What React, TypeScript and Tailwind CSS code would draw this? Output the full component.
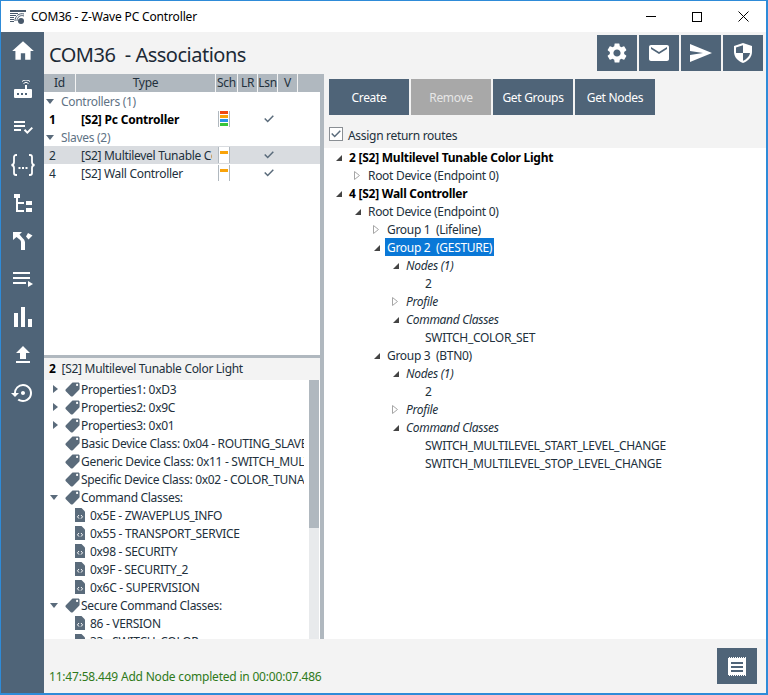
import { MdHome, MdPlaylistAddCheck, MdFileUpload, MdSettingsBackupRestore, MdSettings, MdEmail, MdLocalOffer } from 'react-icons/md';

const FONT = "font-['Noto_Sans',sans-serif]";

function RouterIcon() {
  return (
    <svg width="18" height="18" viewBox="0 0 18 18" fill="white">
      <path d="M1 9h16a1 1 0 0 1 1 1v7a1 1 0 0 1-1 1H1a1 1 0 0 1-1-1v-7a1 1 0 0 1 1-1z" />
      <rect x="11" y="5" width="2" height="4" />
      <path d="M9.500 3.500a3.500 3.500 0 0 1 5 0" fill="none" stroke="white" strokeWidth="1" />
      <path d="M8 1.500a6 6 0 0 1 8 0" fill="none" stroke="white" strokeWidth="1" />
      <rect x="3" y="13" width="2" height="2" fill="#4f6478" />
      <rect x="7" y="13" width="2" height="2" fill="#4f6478" />
      <rect x="11" y="13" width="2" height="2" fill="#4f6478" />
    </svg>
  );
}

function BracesIcon() {
  return (
    <svg width="24" height="24" viewBox="0 0 24 24" fill="none" stroke="white" strokeWidth="1.800">
      <path d="M6 2H5a2 2 0 0 0-2 2v5a3 3 0 0 1-2.500 3A3 3 0 0 1 3 15v5a2 2 0 0 0 2 2h1" />
      <path d="M18 2h1a2 2 0 0 1 2 2v5a3 3 0 0 0 2.500 3 3 3 0 0 0-2.500 3v5a2 2 0 0 1-2 2h-1" />
      <path d="M7.500 15h2M11 15h2M14.500 15h2" />
    </svg>
  );
}

function TreeIcon() {
  return (
    <svg width="18" height="18" viewBox="0 0 18 18" fill="white">
      <rect x="0" y="0" width="6" height="4" />
      <rect x="2" y="4" width="2" height="14" />
      <rect x="4" y="8" width="6" height="2" />
      <rect x="4" y="16" width="6" height="2" />
      <rect x="12" y="7" width="6" height="4" />
      <rect x="12" y="14" width="6" height="4" />
    </svg>
  );
}

function RouteIcon() {
  return (
    <svg width="20" height="18" viewBox="0 0 20 18" fill="white">
      <path d="M0 0h9L6.500 2.500l3 3.500A6 6 0 0 1 12 10v8H8v-8a3 3 0 0 0-.8-2L3.500 5 0 8z" />
      <path d="M15 1l4.500 2.500-4 4-2.500-3z" />
    </svg>
  );
}

function QueueIcon() {
  return (
    <svg width="20" height="15" viewBox="0 0 20 15" fill="white">
      <rect x="0" y="0" width="17" height="2" />
      <rect x="0" y="5" width="17" height="2" />
      <rect x="0" y="10" width="13" height="2" />
      <path d="M15 9l5 3-5 3z" />
    </svg>
  );
}

function BarsIcon() {
  return (
    <svg width="18" height="20" viewBox="0 0 18 20" fill="white">
      <rect x="0" y="6" width="4" height="14" />
      <rect x="7" y="0" width="4" height="20" />
      <rect x="14" y="12" width="4" height="8" />
    </svg>
  );
}

function SendIcon() {
  return (
    <svg width="22" height="18" viewBox="0 0 22 18" fill="white">
      <path d="M0 0l22 9L0 18v-7l13-2L0 7z" />
    </svg>
  );
}

function ShieldIcon() {
  return (
    <svg width="18" height="20" viewBox="0 0 18 20">
      <path d="M9 0l9 3v6c0 5-4 9-9 11-5-2-9-6-9-11V3z" fill="white" />
      <path d="M9 2.200L2 4.500V10h7zM9 10v7.800c3.500-1.600 6.500-4.300 7-7.800z" fill="#4f6478" />
    </svg>
  );
}

function ReceiptIcon() {
  return (
    <svg width="18" height="19" viewBox="0 0 18 19">
      <path d="M0 0h18v19H0z" fill="white" />
      <path d="M0 .500h18M0 18.500h18" stroke="#4f6478" strokeWidth="1" strokeDasharray="1 1" />
      <path d="M3 5h12v2H3zM3 9h12v2H3zM3 13h12v2H3z" fill="#4f6478" />
    </svg>
  );
}

function FileCodeIcon() {
  return (
    <svg width="10" height="14" viewBox="0 0 10 14" className="shrink-0">
      <path d="M0 0h6.500L10 3.500V14H0z" fill="#5a6b7b" />
      <path d="M4 7L2.500 8.800 4 10.600M6 7l1.500 1.800L6 10.600" fill="none" stroke="white" strokeWidth="1" />
    </svg>
  );
}

function Tag() {
  return <MdLocalOffer size={17} className="shrink-0 -scale-x-100 text-[#5a6b7b]" />;
}

function DarkExpander({ open }: { open: boolean }) {
  if (open) {
    return (
      <svg width="7" height="7" viewBox="0 0 7 7" className="shrink-0">
        <path d="M7 1v6H1z" fill="#444" />
      </svg>
    );
  }
  return (
    <svg width="6" height="9" viewBox="0 0 6 9" className="shrink-0">
      <path d="M.5.500l5 4-5 4z" fill="white" stroke="#a6a6a6" />
    </svg>
  );
}

function SolidExpander({ open }: { open: boolean }) {
  if (open) {
    return (
      <svg width="8" height="5" viewBox="0 0 8 5" className="shrink-0">
        <path d="M0 0h8L4 5z" fill="#5a6b7b" />
      </svg>
    );
  }
  return (
    <svg width="5" height="8" viewBox="0 0 5 8" className="shrink-0">
      <path d="M0 0l5 4-5 4z" fill="#5a6b7b" />
    </svg>
  );
}

const SIDE_ICONS = [
  <MdHome key="home" size={26} />,
  <RouterIcon key="router" />,
  <MdPlaylistAddCheck key="check" size={24} />,
  <BracesIcon key="json" />,
  <TreeIcon key="tree" />,
  <RouteIcon key="route" />,
  <QueueIcon key="play" />,
  <BarsIcon key="bars" />,
  <MdFileUpload key="upload" size={24} />,
  <MdSettingsBackupRestore key="restore" size={24} />,
];

const HEADERS = [
  { label: 'Id', w: 'w-[32px]' },
  { label: 'Type', w: 'w-[140px]' },
  { label: 'Sch', w: 'w-[22px]' },
  { label: 'LR', w: 'w-[20px]' },
  { label: 'Lsn', w: 'w-[20px]' },
  { label: 'V', w: 'w-[20px]' },
];

function SchemeBars({ full }: { full?: boolean }) {
  return (
    <div className="flex flex-col items-center gap-px w-[12px] h-[16px] border-x border-[#b0b8bf] bg-white">
      <div className={`w-[8px] h-[3px] ${full ? 'bg-[#f04a12]' : ''}`} />
      <div className="w-[8px] h-[3px] bg-[#f9a30a]" />
      {full && <div className="w-[8px] h-[3px] bg-[#2b93e8]" />}
      {full && <div className="w-[8px] h-[3px] bg-[#38c53a]" />}
    </div>
  );
}

function Check() {
  return (
    <svg width="10" height="8" viewBox="0 0 10 8" fill="none" className="shrink-0">
      <path d="M.7 3.500l3 3L9.300.700" stroke="#5a6b7b" strokeWidth="1.500" />
    </svg>
  );
}

function NodeRow({ id, name, bold, selected, full }: { id: string; name: string; bold?: boolean; selected?: boolean; full?: boolean }) {
  return (
    <div className={`flex items-center h-[18px] ${selected ? 'bg-[#d9dce0]' : ''} ${bold ? 'font-bold text-black tracking-[-0.2px]' : 'text-[#22303c]'}`}>
      <div className="w-[37px] pl-[5px] pt-[2px] shrink-0">{id}</div>
      <div className={`w-[131px] pt-[2px] shrink-0 whitespace-nowrap ${selected ? 'overflow-hidden' : ''}`}>{name}</div>
      <div className="ml-[6px] shrink-0"><SchemeBars full={full} /></div>
      <div className="ml-[34px] shrink-0 flex"><Check /></div>
    </div>
  );
}

function GroupRow({ label }: { label: string }) {
  return (
    <div className="flex items-center h-[18px] pl-[2px] gap-[7px] text-[#5f7385]">
      <SolidExpander open />
      <span className="pt-[2px]">{label}</span>
    </div>
  );
}

const DETAIL_ROWS: { text: string; expander?: 'open' | 'closed'; file?: boolean }[] = [
  { text: 'Properties1: 0xD3', expander: 'closed' },
  { text: 'Properties2: 0x9C', expander: 'closed' },
  { text: 'Properties3: 0x01', expander: 'closed' },
  { text: 'Basic Device Class: 0x04 - ROUTING_SLAVE' },
  { text: 'Generic Device Class: 0x11 - SWITCH_MULTILEVEL' },
  { text: 'Specific Device Class: 0x02 - COLOR_TUNABLE' },
  { text: 'Command Classes:', expander: 'open' },
  { text: '0x5E - ZWAVEPLUS_INFO', file: true },
  { text: '0x55 - TRANSPORT_SERVICE', file: true },
  { text: '0x98 - SECURITY', file: true },
  { text: '0x9F - SECURITY_2', file: true },
  { text: '0x6C - SUPERVISION', file: true },
  { text: 'Secure Command Classes:', expander: 'open' },
  { text: '86 - VERSION', file: true },
  { text: '33 - SWITCH_COLOR', file: true },
];

function DetailRow({ text, expander, file }: { text: string; expander?: 'open' | 'closed'; file?: boolean }) {
  if (file) {
    return (
      <div className="flex items-center h-[18px] pl-[31px] gap-[5px] text-[#22303c] whitespace-nowrap">
        <FileCodeIcon />
        <span className="pt-[2px]">{text}</span>
      </div>
    );
  }
  return (
    <div className="flex items-center h-[18px] text-[#22303c] whitespace-nowrap">
      <div className="w-[20px] shrink-0 flex justify-end pr-[6px]">
        {expander && <SolidExpander open={expander === 'open'} />}
      </div>
      <Tag />
      <span className="pt-[2px]">{text}</span>
    </div>
  );
}

const ASSOC_ROWS: { text: string; indent: string; expander?: 'open' | 'closed'; style?: 'bold' | 'italic' | 'selected' }[] = [
  { text: '2 [S2] Multilevel Tunable Color Light', indent: 'pl-[11px]', expander: 'open', style: 'bold' },
  { text: 'Root Device (Endpoint 0)', indent: 'pl-[30px]', expander: 'closed' },
  { text: '4 [S2] Wall Controller', indent: 'pl-[11px]', expander: 'open', style: 'bold' },
  { text: 'Root Device (Endpoint 0)', indent: 'pl-[30px]', expander: 'open' },
  { text: 'Group 1  (Lifeline)', indent: 'pl-[49px]', expander: 'closed' },
  { text: 'Group 2  (GESTURE)', indent: 'pl-[49px]', expander: 'open', style: 'selected' },
  { text: 'Nodes (1)', indent: 'pl-[68px]', expander: 'open', style: 'italic' },
  { text: '2', indent: 'pl-[101px]' },
  { text: 'Profile', indent: 'pl-[68px]', expander: 'closed', style: 'italic' },
  { text: 'Command Classes', indent: 'pl-[68px]', expander: 'open', style: 'italic' },
  { text: 'SWITCH_COLOR_SET', indent: 'pl-[101px]' },
  { text: 'Group 3  (BTN0)', indent: 'pl-[49px]', expander: 'open' },
  { text: 'Nodes (1)', indent: 'pl-[68px]', expander: 'open', style: 'italic' },
  { text: '2', indent: 'pl-[101px]' },
  { text: 'Profile', indent: 'pl-[68px]', expander: 'closed', style: 'italic' },
  { text: 'Command Classes', indent: 'pl-[68px]', expander: 'open', style: 'italic' },
  { text: 'SWITCH_MULTILEVEL_START_LEVEL_CHANGE', indent: 'pl-[101px]' },
  { text: 'SWITCH_MULTILEVEL_STOP_LEVEL_CHANGE', indent: 'pl-[101px]' },
];

function AssocRow({ text, indent, expander, style }: (typeof ASSOC_ROWS)[number]) {
  return (
    <div className={`flex items-center h-[18px] whitespace-pre ${indent} ${style === 'bold' ? 'font-bold text-black tracking-[-0.25px]' : 'text-[#22303c]'} ${style === 'italic' ? 'italic' : ''}`}>
      {expander && (
        <div className="w-[14px] shrink-0 flex">
          <DarkExpander open={expander === 'open'} />
        </div>
      )}
      <span className={style === 'selected' ? 'h-[18px] flex items-center bg-[#0a78d7] text-white px-[2px] pt-[2px] -ml-[2px]' : 'pt-[2px]'}>{text}</span>
    </div>
  );
}

const ACTIONS = ['Create', 'Remove', 'Get Groups', 'Get Nodes'];

export default function App() {
  return (
    <div className={`${FONT} w-[768px] h-[695px] flex flex-col bg-white text-[12px] tracking-[-0.3px] border-t border-l border-r-2 border-b-2 border-[#2e8bd8] overflow-hidden leading-none`}>
      {/* title bar */}
      <div className="h-[31px] shrink-0 flex items-center bg-white">
        <svg width="16" height="16" viewBox="0 0 16 16" className="ml-[9px] mr-[5px]">
          <path d="M0 1h16v2H0zM0 4h8v1H0zM0 6h6v1H0zM0 8h4v1H0zM0 10h4v1H0zM0 12h4v1H0z" fill="#47586a" />
          <path d="M5 12a7 7 0 0 1 9-7M7 12a5 5 0 0 1 7-5" fill="none" stroke="#47586a" strokeWidth="1" />
          <circle cx="11" cy="12" r="3" fill="#47586a" />
        </svg>
        <span className="text-[12px] tracking-[-0.15px] text-black">COM36 - Z-Wave PC Controller</span>
        <div className="ml-auto flex items-center">
          <div className="w-[46px] h-[31px] flex items-center justify-center">
            <div className="w-[10px] h-px bg-black" />
          </div>
          <div className="w-[46px] h-[31px] flex items-center justify-center">
            <div className="w-[10px] h-[10px] border border-black" />
          </div>
          <div className="w-[46px] h-[31px] flex items-center justify-center">
            <svg width="11" height="11" viewBox="0 0 11 11"><path d="M.5.500l10 10M10.500.500l-10 10" stroke="black" strokeWidth="1" /></svg>
          </div>
        </div>
      </div>

      <div className="flex-1 flex min-h-0">
        {/* sidebar */}
        <div className="w-[43px] shrink-0 bg-[#4f6478] text-white flex flex-col items-center">
          {SIDE_ICONS.map((icon, i) => (
            <div key={i} className="h-[38px] flex items-center justify-center">{icon}</div>
          ))}
        </div>

        {/* main */}
        <div className="flex-1 min-w-0 flex flex-col bg-[#f3f3f3]">
          <div className="h-[42px] shrink-0 flex items-start pl-[5px] pr-[3px] pt-[3px]">
            <span className="text-[20px] tracking-[-0.5px] leading-[40px] text-[#1c2a36] whitespace-pre">COM36  - Associations</span>
            <div className="ml-auto flex gap-[2px]">
              <div className="w-[40px] h-[36px] bg-[#4f6478] flex items-center justify-center text-white"><MdSettings size={24} /></div>
              <div className="w-[40px] h-[36px] bg-[#4f6478] flex items-center justify-center text-white"><MdEmail size={24} /></div>
              <div className="w-[40px] h-[36px] bg-[#4f6478] flex items-center justify-center"><SendIcon /></div>
              <div className="w-[40px] h-[36px] bg-[#4f6478] flex items-center justify-center"><ShieldIcon /></div>
            </div>
          </div>

          <div className="flex-1 min-h-0 flex">
            {/* left column */}
            <div className="w-[276px] shrink-0 flex flex-col">
              <div className="h-[18px] shrink-0 bg-[#b0b8bf] flex text-[#22303c]">
                {HEADERS.map(h => (
                  <div key={h.label} className={`${h.w} shrink-0 flex items-center justify-center border-r border-[#f3f3f3]`}>{h.label}</div>
                ))}
              </div>
              <div className="h-[263px] shrink-0 bg-white">
                <GroupRow label="Controllers (1)" />
                <NodeRow id="1" name="[S2] Pc Controller" bold full />
                <GroupRow label="Slaves (2)" />
                <NodeRow id="2" name="[S2] Multilevel Tunable Color Light" selected />
                <NodeRow id="4" name="[S2] Wall Controller" />
              </div>
              <div className="h-[3px] shrink-0 bg-[#b0b8bf]" />
              <div className="h-[22px] shrink-0 flex items-center pl-[5px] text-[#22303c] gap-[6px]">
                <span className="font-bold text-black">2</span>
                <span>[S2] Multilevel Tunable Color Light</span>
              </div>
              <div className="h-[259px] shrink-0 bg-white flex overflow-hidden">
                <div className="w-[260px] shrink-0 overflow-hidden">
                  {DETAIL_ROWS.map(r => <DetailRow key={r.text} {...r} />)}
                </div>
                <div className="w-[16px] shrink-0 pl-[5px] pr-px flex flex-col">
                  <div className="h-[148px] bg-[#b0b8bf]" />
                  <div className="flex-1 bg-[#e8eaec]" />
                </div>
              </div>
            </div>

            {/* splitter */}
            <div className="w-[4px] shrink-0 bg-[#b0b8bf]" />

            {/* right column */}
            <div className="flex-1 min-w-0 flex flex-col">
              <div className="h-[5px] shrink-0" />
              <div className="flex gap-[2px] pl-[5px] shrink-0">
                {ACTIONS.map(a => (
                  <div key={a} className={`w-[80px] h-[36px] pt-[2px] flex items-center justify-center ${a === 'Remove' ? 'bg-[#a8a8a8] text-[#e6e6e6]' : 'bg-[#4f6478] text-white'}`}>{a}</div>
                ))}
              </div>
              <div className="h-[33px] shrink-0 flex items-start pt-[12px] pl-[5px] gap-[5px] text-[#22303c]">
                <div className="w-[14px] h-[14px] border border-[#8a8f94] bg-white flex items-center justify-center"><Check /></div>
                <span className="leading-[14px] mt-[2px]">Assign return routes</span>
              </div>
              <div className="flex-1 min-h-0 bg-white">
                {ASSOC_ROWS.map((r, i) => <AssocRow key={i} {...r} />)}
              </div>
            </div>
          </div>

          {/* status bar */}
          <div className="h-[54px] shrink-0 flex items-center pl-[5px] pr-[9px]">
            <span className="text-[12px] tracking-[-0.2px] text-[#2f7a1a] mt-[22px]">11:47:58.449 Add Node completed in 00:00:07.486</span>
            <div className="ml-auto w-[40px] h-[36px] bg-[#4f6478] flex items-center justify-center"><ReceiptIcon /></div>
          </div>
        </div>
      </div>
    </div>
  );
}
